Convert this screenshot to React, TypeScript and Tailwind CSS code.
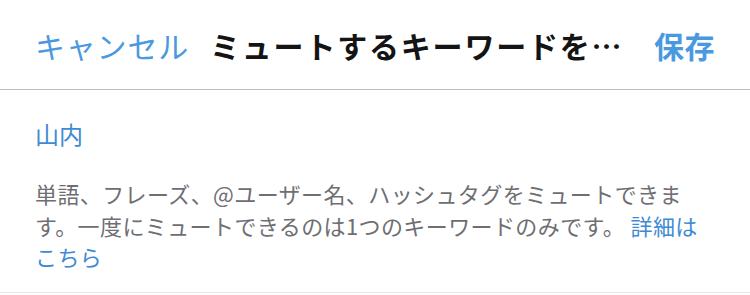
import React from "react";

export default function App() {
  const font = { fontFamily: '"Noto Sans CJK JP", "Noto Sans", sans-serif' };
  return (
    <div className="w-[750px] h-[295px] bg-white overflow-hidden" style={font}>
      <div className="h-[90px] flex items-center px-[35px] border-b border-[#bcbec2]">
        <span className="text-[30px] tracking-[0.8px] text-[#4a99e0] whitespace-nowrap leading-none">キャンセル</span>
        <span className="ml-[21px] w-[422px] text-[30px] tracking-[1.8px] font-bold text-[#141414] whitespace-nowrap overflow-hidden text-ellipsis leading-[1.2]">
          ミュートするキーワードを追加
        </span>
        <span className="ml-auto text-[30px] tracking-[0.5px] font-bold text-[#4a99e0] whitespace-nowrap leading-none">保存</span>
      </div>
      <div className="h-[203px] border-b border-[#e6e9ec] px-[35px]">
        <div className="pt-[29px] text-[24px] leading-[30px] text-[#3f8bd3]">山内</div>
        <p className="mt-[29px] text-[22px] tracking-[0.4px] leading-[31.5px] text-[#6e6e73]">
          単語、フレーズ、@ユーザー名、ハッシュタグをミュートできます。一度にミュートできるのは1つのキーワードのみです。{" "}
          <span className="text-[#3f8bd3]">詳細はこちら</span>
        </p>
      </div>
    </div>
  );
}
